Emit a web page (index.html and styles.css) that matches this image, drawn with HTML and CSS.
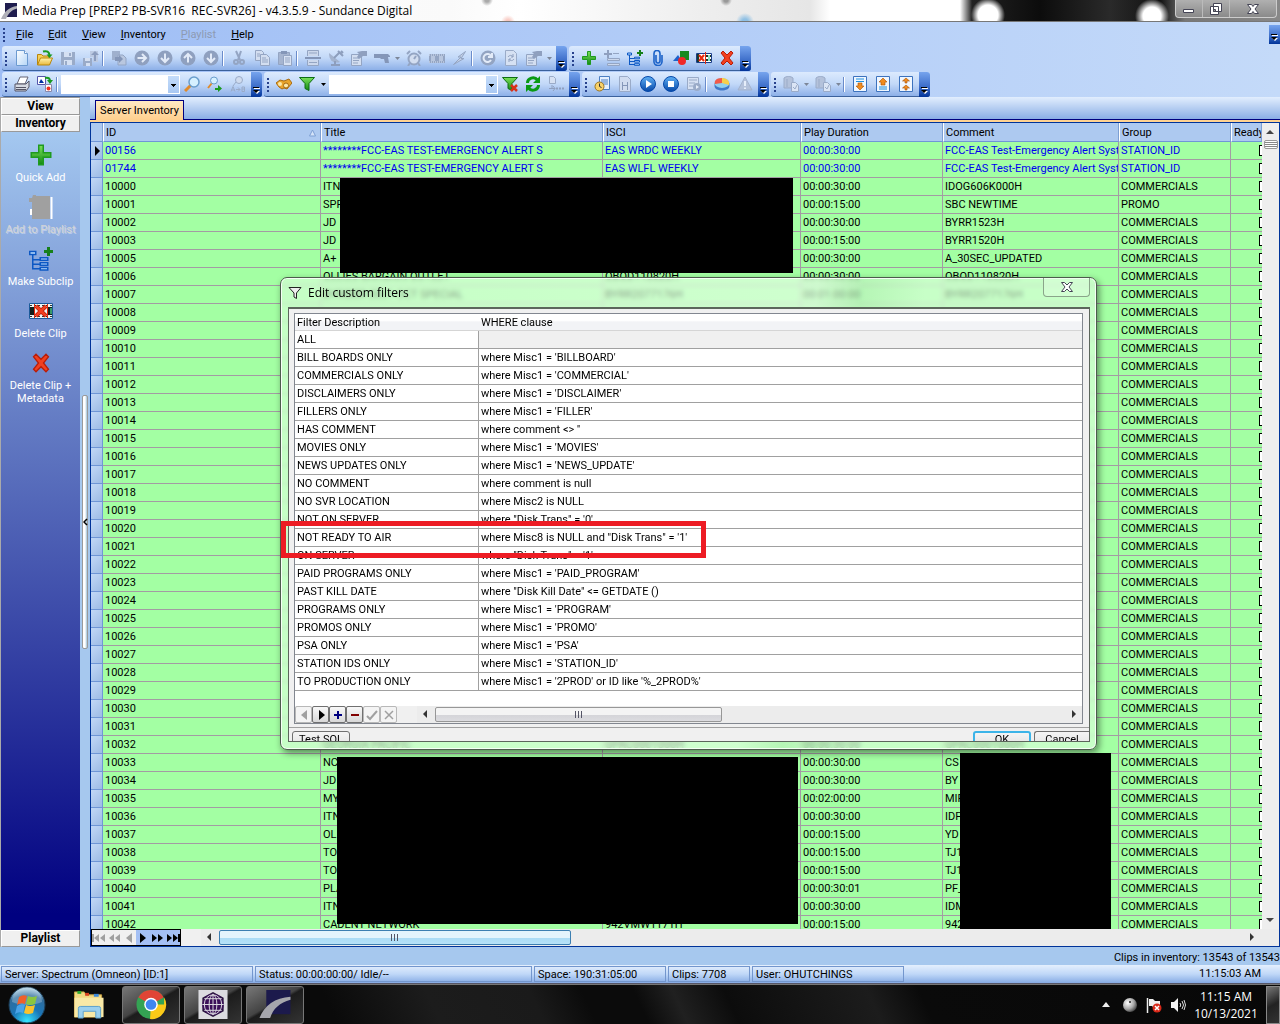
FILE: index.html
```html
<!DOCTYPE html>
<html lang="en">
<head>
<meta charset="utf-8">
<title>Media Prep</title>
<link rel="stylesheet" href="styles.css">
</head>
<body>
<svg class="sprite" aria-hidden="true">
  <defs>
    <linearGradient id="gGreen" x1="0" y1="0" x2="0" y2="1"><stop offset="0" stop-color="#7be05a"/><stop offset="1" stop-color="#128a12"/></linearGradient>
    <linearGradient id="gBlue" x1="0" y1="0" x2="0" y2="1"><stop offset="0" stop-color="#5fb0f5"/><stop offset="1" stop-color="#0648a8"/></linearGradient>
    <linearGradient id="gPage" x1="0" y1="0" x2="1" y2="1"><stop offset="0" stop-color="#fff"/><stop offset="1" stop-color="#b5d6f7"/></linearGradient>
    <linearGradient id="gFolder" x1="0" y1="0" x2="0" y2="1"><stop offset="0" stop-color="#fff3b0"/><stop offset="1" stop-color="#e9b93c"/></linearGradient>
    <radialGradient id="gOrb" cx=".5" cy=".95" r=".9"><stop offset="0" stop-color="#35e6ff"/><stop offset=".45" stop-color="#1a76b8"/><stop offset=".8" stop-color="#2f6c9c"/><stop offset="1" stop-color="#9fc6dd"/></radialGradient>
    <radialGradient id="gBall" cx=".35" cy=".35" r=".7"><stop offset="0" stop-color="#fff"/><stop offset=".6" stop-color="#aaa"/><stop offset="1" stop-color="#444"/></radialGradient>
  </defs>
  <symbol id="i-new" viewBox="0 0 16 16"><path d="M2.500.5h8l3 3v12h-11z" fill="url(#gPage)" stroke="#6c9ad0"/><path d="M10.500.5v3h3" fill="#fff" stroke="#6c9ad0"/></symbol>
  <symbol id="i-open" viewBox="0 0 16 16"><path d="M.5 14.500v-10h4l1.500 1.500h6v8.500z" fill="#f5cf5a" stroke="#b8860b"/><path d="M.5 15l3-7h12l-3 7z" fill="url(#gFolder)" stroke="#b8860b"/><path d="M6 1.500c4-1 6 0 6.500 3.500" fill="none" stroke="#18981f" stroke-width="2"/><path d="M9.500 4.500h6l-3 3.500z" fill="#18981f"/></symbol>
  <symbol id="i-save" viewBox="0 0 16 16"><path d="M1 2h14v13H1z" fill="#9aabc8"/><path d="M4 2h8v5H4zM4 10h8v5H4z" fill="#d5e0f2"/><path d="M5 11h2v4H5zM9 3h2v3H9z" fill="#9aabc8"/></symbol>
  <symbol id="i-savearrow" viewBox="0 0 16 16"><path d="M0 8h9v8H0z" fill="#9aabc8"/><path d="M2 8h5v3H2zM3 13h4v3H3z" fill="#d5e0f2"/><path d="M7 1h8v11h-5V7H7z" fill="#bccae2"/><path d="M11 11V5H8l4-4 4 4h-3v6z" fill="#8c9dbd"/></symbol>
  <symbol id="i-copyarrow" viewBox="0 0 16 16"><path d="M1 1h8v9H1z" fill="#9fb0cd"/><path d="M7 5h5l3 3v7H7z" fill="#b9c7df" stroke="#93a5c4"/><path d="M4 7h4V5l4 4-4 4v-2H4z" fill="#8496b8"/></symbol>
  <symbol id="i-right" viewBox="0 0 16 16"><circle cx="8" cy="8" r="7.500" fill="#8fa0bf"/><path d="M3.500 8h8M8 4l4 4-4 4" fill="none" stroke="#e3ebf8" stroke-width="2"/></symbol>
  <symbol id="i-down" viewBox="0 0 16 16"><circle cx="8" cy="8" r="7.500" fill="#8fa0bf"/><path d="M8 3.500v8M4 8l4 4 4-4" fill="none" stroke="#e3ebf8" stroke-width="2"/></symbol>
  <symbol id="i-up" viewBox="0 0 16 16"><circle cx="8" cy="8" r="7.500" fill="#8fa0bf"/><path d="M8 12.500v-8M4 8l4-4 4 4" fill="none" stroke="#e3ebf8" stroke-width="2"/></symbol>
  <symbol id="i-cut" viewBox="0 0 16 16"><path d="M5 1l4 9M10 1L7 10" stroke="#94a5c3" stroke-width="2"/><circle cx="5" cy="12" r="2" fill="none" stroke="#94a5c3" stroke-width="2"/><circle cx="11" cy="12" r="2" fill="none" stroke="#94a5c3" stroke-width="2"/></symbol>
  <symbol id="i-copy" viewBox="0 0 16 16"><path d="M1.500.5h6l2 2v8h-8z" fill="#d3def0" stroke="#94a5c3"/><path d="M6.500 4.500h6l3 3v8h-9z" fill="#d3def0" stroke="#94a5c3"/><path d="M8 8h4M8 10h6M8 12h6M3 4h3M3 6h3" stroke="#94a5c3"/></symbol>
  <symbol id="i-paste" viewBox="0 0 16 16"><path d="M1.500 2.500h11v12h-11z" fill="#a6b5d0" stroke="#94a5c3"/><path d="M4 1h6v3H4z" fill="#8496b8"/><path d="M6.500 5.500h8v10h-8z" fill="#d8e2f3" stroke="#94a5c3"/><path d="M8 8h5M8 10h5M8 12h5" stroke="#94a5c3"/></symbol>
  <symbol id="i-split" viewBox="0 0 16 16"><path d="M2.500 6V.5h11V6M2.500 10v5.500h11V10" fill="#ccd8ec" stroke="#94a5c3"/><path d="M0 8h16" stroke="#8496b8" stroke-width="2"/><path d="M4 3h8M4 12.500h8" stroke="#94a5c3"/></symbol>
  <symbol id="i-dish" viewBox="0 0 16 16"><path d="M1 3c0 8 5 11 11 9z" fill="#a3b3ce"/><path d="M6 8l6-6M13 1l2 2M10 1l5 5M3 15h9M7 11v4" stroke="#8d9ebd" stroke-width="2"/></symbol>
  <symbol id="i-props" viewBox="0 0 16 16"><path d="M.5 4.500h10v11H.5z" fill="#d3def0" stroke="#94a5c3"/><path d="M2 8h6M2 10.500h6M2 13h5" stroke="#94a5c3"/><path d="M6 2l5-1h5v5h-4L8 9 6 7l2-3z" fill="#8fa0bf"/></symbol>
  <symbol id="i-gun" viewBox="0 0 16 16"><path d="M0 4h14l2 2v1h-2l1 6h-4l-1-4H7L6 8H0z" fill="#8496b8"/></symbol>
  <symbol id="i-clock" viewBox="0 0 16 16"><circle cx="8" cy="9" r="5.500" fill="#d3def0" stroke="#94a5c3" stroke-width="2"/><path d="M8 9l2-3M1 4l3-3M15 4l-3-3M4 13l-2 3M12 13l2 3" stroke="#94a5c3" stroke-width="2"/></symbol>
  <symbol id="i-film" viewBox="0 0 16 16"><path d="M0 4h16v9H0z" fill="#94a5c3"/><path d="M2 6h4v5H2zM10 6h4v5h-4z" fill="#b8c6de"/><path d="M0 5h16M0 12h16" stroke="#dbe5f5" stroke-dasharray="1 1"/></symbol>
  <symbol id="i-bolt" viewBox="0 0 16 16"><path d="M13.500 1.500L6 7h3L1.500 14.500 12 8.500H9z" fill="#c4d1e7" stroke="#94a5c3"/></symbol>
  <symbol id="i-c" viewBox="0 0 16 16"><circle cx="8" cy="8" r="7.500" fill="#93a4c2"/><path d="M11 6a4 4 0 1 0 0 4M12 3v4H8" fill="none" stroke="#e3ebf8" stroke-width="2"/></symbol>
  <symbol id="i-pageref" viewBox="0 0 16 16"><path d="M2.500.5h8l3 3v12h-11z" fill="#d6e1f3" stroke="#9aabc8"/><path d="M5 7c2-3 5-1 5 0M11 9c-2 3-5 1-5 0M10 4v3H8M6 12V9h2" fill="none" stroke="#8fa0bf"/></symbol>
  <symbol id="i-plus" viewBox="0 0 16 16"><path d="M6.500 1.500h3v5h5v3h-5v5h-3v-5h-5v-3h5z" fill="url(#gGreen)" stroke="#1f9a1f"/></symbol>
  <symbol id="i-listadd" viewBox="0 0 16 16"><path d="M4 0v8M0 4h8" stroke="#8fa0bf" stroke-width="2"/><path d="M9 3.500h6M3.500 8.500h12v2h-12zM3.500 13.500h12v2h-12z" fill="#ccd8ec" stroke="#94a5c3"/></symbol>
  <symbol id="i-tree" viewBox="0 0 16 16"><path d="M2.500 4v11M2.500 8.500h5M2.500 11.500h5M2.500 14.500h5" fill="none" stroke="#0d58c4"/><path d="M.5 3h4v2h-4zM7.500 7.200h5v1.600h-5zM7.500 10.500h5v1.600h-5zM7.500 13.700h5v1.600h-5z" fill="#b9dbff" stroke="#0d58c4"/><path d="M13 0v6M10 3h6" stroke="#16801a" stroke-width="2"/></symbol>
  <symbol id="i-clip" viewBox="0 0 16 16"><path d="M6 5v6a2 2 0 0 0 4 0V3.500a3 3 0 0 0-6 0V11a4 4 0 0 0 8 1V5" fill="none" stroke="#1b62c8" stroke-width="1.600"/></symbol>
  <symbol id="i-shapes" viewBox="0 0 16 16"><path d="M7 1h9v9H7z" fill="#188a1e"/><path d="M0 11l5-6 4 6z" fill="#1e62cc"/><circle cx="9" cy="11" r="4" fill="#f02828"/></symbol>
  <symbol id="i-delclip" viewBox="0 0 16 16"><path d="M.5 3.500h15v9H.5z" fill="#fff" stroke="#1b3e8a"/><path d="M1 4h2v8H1zM10 5h5v2h-5zM10 9h5v2h-5z" fill="#173a2e"/><path d="M12 5h2v6h-2z" fill="#8fe0c0"/><path d="M3 5l5 6M8 5l-5 6" stroke="#e8290b" stroke-width="2"/><path d="M9.500 2v12" stroke="#e8290b"/></symbol>
  <symbol id="i-delclip2" viewBox="0 0 24 24"><path d="M.5 4.500h23v15H.5z" fill="#eef6f4" stroke="#1b5a9a"/><path d="M1 8h4v8H1zM19 8h4v8h-4z" fill="#12201c"/><path d="M21 9h2v6h-2z" fill="#3a9a6a"/><path d="M1 6.500h22M1 17.500h22" stroke="#333" stroke-dasharray="2 2"/><path d="M5.500 5v14M18.500 5v14" stroke="#e8290b"/><path d="M7 7l10 10M17 7L7 17" stroke="#b81c08" stroke-width="4"/><path d="M7 7l10 10M17 7L7 17" stroke="#f2401f" stroke-width="2.500"/></symbol>
  <symbol id="i-x" viewBox="0 0 16 16"><path d="M2 3l2-2 4 4 4-4 2 2-4 5 4 5-2 2-4-4-4 4-2-2 4-5z" fill="#f2401f" stroke="#b81c08"/></symbol>
  <symbol id="i-print" viewBox="0 0 16 16"><path d="M6 1h8l-3 7H3z" fill="#fff" stroke="#667"/><path d="M1 8h11l3-3v6l-3 4H1z" fill="#d5d9e2" stroke="#556"/><path d="M2 11.500h10M2 13.500h10" stroke="#556"/></symbol>
  <symbol id="i-convert" viewBox="0 0 16 16"><path d="M.5.5h8v8h-8z" fill="#fff" stroke="#55a"/><path d="M2 7l2-4 3 4z" fill="#0030a0"/><path d="M8.500 8.500h6v7h-6z" fill="#fff" stroke="#88a"/><circle cx="11.500" cy="12.500" r="2" fill="#f03020"/><path d="M8 2c4-1 5 1 5 3" fill="none" stroke="#18981f" stroke-width="2"/><path d="M10 4h6l-3 4z" fill="#18981f"/></symbol>
  <symbol id="i-find" viewBox="0 0 16 16"><path d="M7 9l-6 6" stroke="#e08a2a" stroke-width="3"/><circle cx="10" cy="6" r="5" fill="#d6f0ff" stroke="#6a9dcc" stroke-width="1.500"/></symbol>
  <symbol id="i-findnext" viewBox="0 0 16 16"><path d="M5 7l-4 5" stroke="#e08a2a" stroke-width="2"/><circle cx="7" cy="4.500" r="3.500" fill="#d6f0ff" stroke="#6a9dcc"/><path d="M8 12h3V9l4 3.500-4 3.500v-2H8z" fill="#1b9a1f"/></symbol>
  <symbol id="i-replace" viewBox="0 0 16 16"><circle cx="9" cy="4" r="3.500" fill="#d0dcef" stroke="#9aabc8"/><path d="M6 6l-3 4M1 15.500l2-5 2 5M1.500 14h3M6 13.500h4M8 11.500l2 2-2 2M12 11h2.500v4.500H12zM12 13h3" fill="none" stroke="#9aabc8"/></symbol>
  <symbol id="i-binoc" viewBox="0 0 16 16"><path d="M0 7l4-3 4 1 5-2 3 4-5 6-3-1-2 1-3-2z" fill="#e9a52b" stroke="#a86a10"/><circle cx="4" cy="8" r="2" fill="#fbe8a8"/><circle cx="10" cy="9.500" r="2.500" fill="#fbe8a8" stroke="#a86a10"/></symbol>
  <symbol id="i-funnel" viewBox="0 0 16 16"><path d="M.5 1.500h15l-5.500 6v7l-4-2v-5z" fill="url(#gGreen)" stroke="#0d6d12"/></symbol>
  <symbol id="i-funnelx" viewBox="0 0 16 16"><path d="M.5 1.500h15l-5.500 6v7l-4-2v-5z" fill="url(#gGreen)" stroke="#0d6d12"/><path d="M9 9l6 6M15 9l-6 6" stroke="#d8311a" stroke-width="2.500"/></symbol>
  <symbol id="i-refresh" viewBox="0 0 16 16"><path d="M2.500 7a5.500 5 0 0 1 10-3M13.500 9a5.500 5 0 0 1-10 3" fill="none" stroke="#0a9a14" stroke-width="3"/><path d="M15 0v7H8zM1 16V9h7z" fill="#0a9a14"/></symbol>
  <symbol id="i-docflow" viewBox="0 0 16 16"><path d="M1.500.5h4l2 2v5h-6z" fill="#d6e1f3" stroke="#9aabc8"/><path d="M1 12.500h6M4 9v3M5 10l2 2.500-2 2.500" fill="none" stroke="#8fa0bf"/><path d="M8 12.500h8" stroke="#8fa0bf" stroke-width="2" stroke-dasharray="2 1"/></symbol>
  <symbol id="i-sched" viewBox="0 0 16 16"><path d="M5.500.5h10v13h-10z" fill="#e5f0ff" stroke="#4c7fc2"/><path d="M7 4h7M7 6h7M7 8h7" stroke="#4c7fc2"/><circle cx="5.500" cy="10.500" r="4.500" fill="#f8d26a" stroke="#9a7320"/><path d="M5.500 7.500v3l2 1" fill="none" stroke="#333"/></symbol>
  <symbol id="i-filmdoc" viewBox="0 0 16 16"><path d="M2.500.5h8l3 3v12h-11z" fill="#d0dcf0" stroke="#9aabc8"/><path d="M5 6h1v8H5zM10 6h1v8h-1zM6 9h4v1H6z" fill="#8496b8"/></symbol>
  <symbol id="i-play" viewBox="0 0 16 16"><circle cx="8" cy="8" r="7.500" fill="url(#gBlue)" stroke="#0648a8"/><path d="M6 4l6 4-6 4z" fill="#fff"/></symbol>
  <symbol id="i-stop" viewBox="0 0 16 16"><circle cx="8" cy="8" r="7.500" fill="url(#gBlue)" stroke="#0648a8"/><path d="M5 5h6v6H5z" fill="#fff"/></symbol>
  <symbol id="i-listplay" viewBox="0 0 16 16"><path d="M1.500 1.500h11v12h-11z" fill="#d6e1f3" stroke="#9aabc8"/><path d="M3 4h8M3 7h6M3 10h4" stroke="#9aabc8"/><circle cx="11" cy="11" r="4" fill="#9aabc8"/><path d="M10 9l3 2-3 2z" fill="#e6eefa"/></symbol>
  <symbol id="i-pie" viewBox="0 0 16 16"><path d="M.5 7v3c0 6 15 6 15 0V7z" fill="#3f78c8"/><ellipse cx="8" cy="7" rx="7.500" ry="5" fill="#8fd0f0"/><path d="M8 7V2C2 2 0 5 1 8z" fill="#f05a4a"/><path d="M8 7l7 2c1-5-3-7-7-7z" fill="#f7cf4a"/></symbol>
  <symbol id="i-warn" viewBox="0 0 16 16"><path d="M8 1l7 13H1z" fill="#b4c2db" stroke="#a3b3ce"/><path d="M8 5v5M8 11.500v1.500" stroke="#e6eefa" stroke-width="2"/></symbol>
  <symbol id="i-dbdoc" viewBox="0 0 16 16"><path d="M1 2c2-2 7-2 9 0v10H1z" fill="#b4c2db" stroke="#9aabc8"/><path d="M8.500 6.500h4l3 3v6h-7z" fill="#dbe5f5" stroke="#9aabc8"/><path d="M4 3v8M10 11l2 2 2-4" fill="none" stroke="#9aabc8"/></symbol>
  <symbol id="i-pgdown" viewBox="0 0 16 16"><path d="M1.500.5h13v15h-13z" fill="#f0f7ff" stroke="#3c72be"/><path d="M4 3h8M4 5.500h8" stroke="#1e90e0"/><path d="M6 7h4v3h2l-4 4-4-4h2z" fill="#f08c1e" stroke="#a85208" stroke-width=".6"/></symbol>
  <symbol id="i-pgup" viewBox="0 0 16 16"><path d="M1.500.5h13v15h-13z" fill="#f0f7ff" stroke="#3c72be"/><path d="M4 11h8M4 13h8" stroke="#1e90e0"/><path d="M6 9h4V6h2L8 2 4 6h2z" fill="#f08c1e" stroke="#a85208" stroke-width=".6"/></symbol>
  <symbol id="i-pgtop" viewBox="0 0 16 16"><path d="M1.500.5h13v15h-13z" fill="#f0f7ff" stroke="#3c72be"/><path d="M8 2l3.500 3H9v2H7V5H4.500zM8 9l3.500 3H9v2H7v-2H4.500z" fill="#f08c1e" stroke="#a85208" stroke-width=".6"/></symbol>
  <symbol id="i-dd" viewBox="0 0 5 3"><path d="M0 0h5L2.500 3z" fill="currentColor"/></symbol>
  <symbol id="i-more" viewBox="0 0 11 25"><path d="M3 16h6v1H3zM3 19h6l-3 3z" fill="#fff"/><path d="M2 15h6v1H2zM2 18h6l-3 3z" fill="#000"/></symbol>
  <symbol id="i-addlist" viewBox="0 0 24 24"><path d="M22.500 2v22M1 5v2M2 14v6" stroke="#fff" stroke-width="2"/><path d="M4 0h3v1h14v23H3V7H0V3h3z" fill="#a0a0a0"/></symbol>
  <symbol id="i-sun" viewBox="0 0 16 16"><path d="M4 0h12v14H4z" fill="#1f1d4e"/><path d="M0 16C3 9 8 4 16 3v2.500C10 7 7 11 5 16z" fill="#b0b0b8"/></symbol>
  <symbol id="i-first" viewBox="0 0 14 12"><path d="M1 2v8" stroke="currentColor" stroke-width="2"/><path d="M7 2v8L2 6zM13 2v8L8 6z" fill="currentColor"/></symbol>
  <symbol id="i-rew" viewBox="0 0 14 12"><path d="M7 2v8L2 6zM13 2v8L8 6z" fill="currentColor"/></symbol>
  <symbol id="i-prev" viewBox="0 0 14 12"><path d="M10 1v10L4 6z" fill="currentColor"/></symbol>
  <symbol id="i-next" viewBox="0 0 14 12"><path d="M4 1v10l6-5z" fill="currentColor"/></symbol>
  <symbol id="i-ff" viewBox="0 0 14 12"><path d="M1 2v8l5-4zM7 2v8l5-4z" fill="currentColor"/></symbol>
  <symbol id="i-last" viewBox="0 0 14 12"><path d="M1 2v8l5-4zM7 2v8l5-4z" fill="currentColor"/><path d="M13 2v8" stroke="currentColor" stroke-width="2"/></symbol>
</svg>

<header class="titlebar">
  <svg class="ic16"><use href="#i-sun"/></svg>
  <h1 class="titlebar-text">Media Prep [PREP2 PB-SVR16&nbsp; REC-SVR26] - v4.3.5.9 - Sundance Digital</h1>
  <div class="winbtns">
    <button type="button" aria-label="Minimize"><svg width="14" height="12"><path d="M1.500 6.500h10v3h-10z" fill="#fff" stroke="#445"/></svg></button>
    <button type="button" aria-label="Restore"><svg width="14" height="12"><path d="M4.500.5h8v8h-8zM1.500 3.500h8v8h-8z" fill="#fff" stroke="#445"/><path d="M4.500 6.500h2v2h-2z" fill="#999" stroke="#445"/></svg></button>
    <button type="button" aria-label="Close" class="wide"><svg width="14" height="12"><path d="M1.500 1.500h4l1.500 2 1.500-2h4L9 6l3.500 4.500h-4L7 8.500l-1.500 2h-4L5 6z" fill="#fff" stroke="#445"/></svg></button>
  </div>
</header>

<div class="bars">
  <nav class="menubar">
    <span class="grip"></span>
    <a href="#"><u>F</u>ile</a><a href="#"><u>E</u>dit</a><a href="#"><u>V</u>iew</a><a href="#"><u>I</u>nventory</a><a href="#" class="off"><u>P</u>laylist</a><a href="#"><u>H</u>elp</a>
    <span class="cap cap-end"><svg><use href="#i-more"/></svg></span>
  </nav>
  <div class="toolrow" id="toolrow1"></div>
  <div class="toolrow" id="toolrow2"></div>
</div>

<main class="work">
  <aside class="side">
    <button type="button" class="side-head">View</button>
    <button type="button" class="side-head">Inventory</button>
    <div class="side-body">
      <a href="#"><svg class="ic24"><use href="#i-plus"/></svg>Quick Add</a>
      <a href="#" class="dim"><svg class="ic24"><use href="#i-addlist"/></svg>Add to Playlist</a>
      <a href="#"><svg class="ic24"><use href="#i-tree"/></svg>Make Subclip</a>
      <a href="#"><svg class="ic24"><use href="#i-delclip2"/></svg>Delete Clip</a>
      <a href="#"><svg class="ic24 pad"><use href="#i-x"/></svg>Delete Clip +<br>Metadata</a>
    </div>
    <button type="button" class="side-head">Playlist</button>
  </aside>
  <div class="splitter"><div class="splitter-grip"><svg width="5" height="8"><path d="M4 1L1 4l3 3" fill="none" stroke="#000" stroke-width="1.500"/></svg></div></div>
  <section class="content">
    <div class="tabs"><button type="button" class="tab">Server Inventory</button></div>
    <div class="frame">
      <div class="gridrow">
        <div class="gridview">
          <table class="inv">
            <colgroup><col class="c-ind"><col class="c-id"><col class="c-title"><col class="c-isci"><col class="c-dur"><col class="c-com"><col class="c-grp"><col></colgroup>
            <thead><tr><th></th><th><div class="sorted">ID<svg width="7" height="8"><path d="M3.500 1l3 6h-6z" fill="#d4e3f8" stroke="#7d9fd3"/></svg></div></th><th>Title</th><th>ISCI</th><th>Play Duration</th><th>Comment</th><th>Group</th><th>Ready</th></tr></thead>
            <tbody id="inv"></tbody>
          </table>
        </div>
        <div class="vscroll">
          <svg width="9" height="6"><path d="M0 5l4-4 4 4z" fill="#444"/></svg>
          <div class="vthumb"></div>
          <svg class="end" width="9" height="6"><path d="M0 1l4 4 4-4z" fill="#444"/></svg>
        </div>
      </div>
      <div class="hrow">
        <div class="nav">
          <button type="button" aria-label="First" disabled><svg><use href="#i-first"/></svg></button>
          <button type="button" aria-label="Page back" disabled><svg><use href="#i-rew"/></svg></button>
          <button type="button" aria-label="Previous" disabled><svg><use href="#i-prev"/></svg></button>
          <button type="button" aria-label="Next"><svg><use href="#i-next"/></svg></button>
          <button type="button" aria-label="Page forward"><svg><use href="#i-ff"/></svg></button>
          <button type="button" aria-label="Last"><svg><use href="#i-last"/></svg></button>
        </div>
        <div class="hscroll">
          <svg width="6" height="9"><path d="M5 0L1 4l4 4z" fill="#333"/></svg>
          <div class="hthumb blue"><i></i></div>
          <svg class="end" width="6" height="9"><path d="M1 0l4 4-4 4z" fill="#333"/></svg>
        </div>
      </div>
    </div>
  </section>
</main>

<p class="count">Clips in inventory: 13543 of 13543</p>
<footer class="status">
  <span class="s1">Server: Spectrum (Omneon) [ID:1]</span>
  <span class="s2">Status: 00:00:00:00/ Idle/--</span>
  <span class="s3">Space: 190:31:05:00</span>
  <span class="s4">Clips: 7708</span>
  <span class="s5">User: OHUTCHINGS</span>
  <time>11:15:03 AM</time>
</footer>

<div class="taskbar">
  <button type="button" class="orb" aria-label="Start"><svg viewBox="0 0 38 38"><circle cx="19" cy="19" r="18" fill="url(#gOrb)" stroke="#1c3b52"/><path d="M4 16a15 15 0 0 1 30 0c-9 4-21 4-30 0z" fill="#fff" opacity=".25"/><path d="M11 11q4-3 8-1l-2 8q-4-2-8 1z" fill="#f0602a"/><path d="M20 10q4 2 9 0l-2 8q-5 2-9 0z" fill="#8cc63e"/><path d="M9 20q4-3 8-1l-2 8q-4-2-8 1z" fill="#4aa3e8"/><path d="M18 19q4 2 9 0l-2 8q-5 2-9 0z" fill="#fbc22c"/></svg></button>
  <button type="button" class="task plain" aria-label="Explorer"><svg viewBox="0 0 34 32"><path d="M2 3h10l2 3h16v23H2z" fill="#f3d980" stroke="#c8a040"/><path d="M5 2h4v3H5z" fill="#2eaa30"/><path d="M13 4h4v3h-4z" fill="#d84020"/><path d="M22 5h5v3h-5z" fill="#3c88d8"/><path d="M2 9h30v20H2z" fill="#f9e9a6"/><path d="M6 30V20q0-2 2-2h19q2 0 2 2v10h-5v-7H11v7z" fill="#9bd0ee" stroke="#5aa0cc"/></svg></button>
  <button type="button" class="task" aria-label="Chrome"><svg viewBox="0 0 32 32"><circle cx="16" cy="16" r="15" fill="#34a353"/><path d="M16 16L3 8.500A15 15 0 0 1 29 8.500z" fill="#e04436"/><path d="M16 16h13.500V8.500A15 15 0 0 1 15 31z" fill="#fbc918"/><path d="M3 8.500h26L16 16z" fill="#e04436"/><circle cx="16" cy="16" r="7" fill="#fff"/><circle cx="16" cy="16" r="5.500" fill="#3f86f0"/></svg></button>
  <button type="button" class="task" aria-label="Network"><svg viewBox="0 0 32 32"><path d="M1 1h30v30H1z" fill="#dcdce0"/><path d="M16 3l11 6v14l-11 6-11-6V9z" fill="#28143c"/><circle cx="16" cy="16" r="11" fill="#3a1058"/><g fill="none" stroke="#dcdce0"><ellipse cx="16" cy="16" rx="4" ry="10"/><ellipse cx="16" cy="16" rx="9" ry="10"/><path d="M16 5v22M5 16h22M7 10h18M7 22h18"/></g></svg></button>
  <button type="button" class="task" aria-label="Media Prep"><svg viewBox="0 0 34 32"><path d="M8 1h25v25H8z" fill="#1c1a4c"/><path d="M1 30C6 17 17 9 33 8v3C22 14 15 20 12 30z" fill="#a6a6ac"/></svg></button>
  <div class="tray">
    <svg width="8" height="5"><path d="M0 5l4-5 4 5z" fill="#eee"/></svg>
    <svg width="16" height="16"><circle cx="8" cy="8" r="7" fill="url(#gBall)"/><circle cx="8" cy="5" r="1" fill="#222"/></svg>
    <svg width="16" height="16"><path d="M1.500 1v15" stroke="#eee" stroke-width="1.500"/><path d="M3 2h4l2 2h5v7H8L6 9H3z" fill="#eee"/><circle cx="11" cy="11" r="4.500" fill="#d82818"/><path d="M9 9l4 4M13 9l-4 4" stroke="#fff" stroke-width="1.500"/></svg>
    <svg width="16" height="16"><path d="M1 5h3l4-4v14l-4-4H1z" fill="#f4f4f4"/><path d="M10 6q1.500 2 0 4M12 4q3 4 0 8M14 3q3 5 0 10" fill="none" stroke="#ddd"/></svg>
  </div>
  <div class="clock"><span>11:15 AM</span><span>10/13/2021</span></div>
  <button type="button" class="peek" aria-label="Show desktop"></button>
</div>

<div class="redact r1"></div>
<div class="redact r2"></div>
<div class="redact r3"></div>

<div class="dialog" role="dialog" aria-labelledby="dlg-title">
  <div class="dlg-head">
    <svg width="14" height="14"><path d="M1 1.500h12L8.500 7v5.500L6 11V7z" fill="#eee" stroke="#222"/></svg>
    <h2 id="dlg-title">Edit custom filters</h2>
    <button type="button" class="dlg-close" aria-label="Close"><svg width="14" height="12"><path d="M1.500 1.500h3L7 4l2.500-2.500h3L9 6l3.500 4.500h-3L7 8l-2.500 2.500h-3L5 6z" fill="#fff" stroke="#445"/></svg></button>
  </div>
  <div class="dlg-client">
    <div class="dlg-grid">
      <table class="filters">
        <colgroup><col class="c-desc"><col></colgroup>
        <thead><tr><th>Filter Description</th><th>WHERE clause</th></tr></thead>
        <tbody id="filters"></tbody>
      </table>
      <div class="dlg-nav">
        <button type="button" aria-label="Previous" disabled><svg width="12" height="12"><path d="M9 1v10L3 6z" fill="#a0a0a0"/></svg></button>
        <button type="button" aria-label="Next"><svg width="12" height="12"><path d="M4 1v10l6-5z" fill="#000"/></svg></button>
        <button type="button" aria-label="Insert"><svg width="12" height="12"><path d="M6 2v8M2 6h8" stroke="#000080" stroke-width="2"/></svg></button>
        <button type="button" aria-label="Delete"><svg width="12" height="12"><path d="M2 6h8" stroke="#800000" stroke-width="2"/></svg></button>
        <button type="button" aria-label="Post" disabled><svg width="12" height="12"><path d="M1 7l3 3 7-8" fill="none" stroke="#a0a0a0" stroke-width="2"/></svg></button>
        <button type="button" aria-label="Undo" disabled><svg width="12" height="12"><path d="M2 2l8 8M10 2l-8 8" stroke="#a0a0a0" stroke-width="1.500"/></svg></button>
        <div class="hscroll">
          <svg width="6" height="9"><path d="M5 0L1 4l4 4z" fill="#333"/></svg>
          <div class="hthumb"><i></i></div>
          <svg class="end" width="6" height="9"><path d="M1 0l4 4-4 4z" fill="#333"/></svg>
        </div>
      </div>
    </div>
    <div class="dlg-foot">
      <button type="button">Test SQL</button>
      <button type="button" class="default">OK</button>
      <button type="button" class="cut">Cancel</button>
    </div>
  </div>
  <div class="marker"></div>
</div>
<script src="app.js"></script>
</body>
</html>
```
FILE: styles.css
```css
* { box-sizing: border-box; }
html, body { height: 100%; }
body {
  margin: 0;
  display: flex;
  flex-direction: column;
  overflow: hidden;
  position: relative;
  background: #a6c8ee;
  color: #000;
  font: 11px/14px Roboto, "Liberation Sans", sans-serif;
}
button { font: inherit; color: inherit; padding: 0; margin: 0; border: 0; background: none; }
a { color: inherit; text-decoration: none; }
h1, h2, p { margin: 0; font-weight: 400; }
svg { display: block; flex: none; }
.sprite { position: absolute; width: 0; height: 0; }
.ic16 { width: 16px; height: 16px; }
.ic24 { width: 24px; height: 24px; }
.pad { padding: 2px; }

/* title bar */
.titlebar {
  flex: none;
  display: flex;
  align-items: center;
  gap: 5px;
  height: 22px;
  padding-left: 1px;
  border-bottom: 1px solid #777;
  background:
    radial-gradient(circle at 988px 15px, #fff 10px, transparent 17px),
    radial-gradient(circle at 1152px 16px, #fff 9px, transparent 17px),
    radial-gradient(circle at 745px 22px, #8fc0e4 3px, transparent 9px),
    radial-gradient(circle at 508px 22px, #f8c8c0 2px, transparent 7px),
    radial-gradient(circle at 487px 0, #aaa 2px, transparent 6px),
    radial-gradient(circle at 726px 0, #999 2px, transparent 6px),
    linear-gradient(90deg, #fff 0, #fafafa 450px, #fff 520px, #eee 700px, #e6e6e6 810px, #fff 830px, #fff 960px, #222 972px, #0c0c0c 1040px, #2a2a2a 1110px, #111 1160px, #777 1185px, #888 100%);
}
.titlebar-text { font: 12px/16px "Open Sans", "Noto Sans", sans-serif; white-space: nowrap; }
.winbtns {
  display: flex;
  align-self: flex-start;
  height: 18px;
  margin: 0 3px 0 auto;
  border: 1px solid #ccc;
  border-top: 0;
  border-radius: 0 0 4px 4px;
  background: linear-gradient(#b0b0b0, #8a8a8a);
}
.winbtns button { display: grid; place-items: center; width: 27px; border-right: 1px solid #bbb; }
.winbtns .wide { width: 46px; border: 0; }

/* menu and toolbars */
.bars { flex: none; background: linear-gradient(90deg, #9ebdf5, #c4daf9); }
.menubar { display: flex; align-items: center; height: 24px; }
.menubar a { padding: 2px 7px 0 8px; }
.menubar .off { color: #8d9ab2; }
.grip { width: 8px; height: 15px; background: radial-gradient(circle, #27418c 1px, transparent 1px) 2px 0 / 4px 4px repeat-y; flex: none; }
.toolrow { display: flex; gap: 2px; height: 26px; padding-left: 2px; }
.band {
  display: flex;
  align-items: center;
  height: 25px;
  border-radius: 3px;
  background: linear-gradient(#dceafe, #c2d8f8 50%, #8db0e8);
  border-bottom: 1px solid #3b619c;
}
.band .cap { margin-left: 2px; }
.cap { width: 11px; height: 25px; border-radius: 0 3px 3px 0; background: linear-gradient(#76a4ee, #3b6cc8 60%, #003399); flex: none; }
.cap svg { width: 11px; height: 25px; }
.cap-end { height: 19px; margin-left: auto; overflow: hidden; border-radius: 0; }
.cap-end svg { margin-top: -6px; }
.tool { display: flex; align-items: center; justify-content: center; width: 23px; height: 23px; }
.tool svg { width: 16px; height: 16px; }
.tool-dd { width: 9px; height: 23px; display: grid; place-items: center; color: #7c8698; }
.tool-dd.on { color: #000; width: 11px; }
.tool-dd svg { width: 5px; height: 3px; }
.sep { width: 5px; height: 15px; border-left: 1px solid #6a8ccb; box-shadow: inset 1px 0 #fff; flex: none; }
.combo {
  appearance: none;
  width: 119px;
  height: 19px;
  border: 1px solid #fff;
  border-radius: 0;
  background: linear-gradient(#000, #000) no-repeat right 3px top 8px / 5px 1px, linear-gradient(#000, #000) no-repeat right 4px top 9px / 3px 1px, linear-gradient(#000, #000) no-repeat right 5px top 10px / 1px 1px, linear-gradient(#c4dcfa, #a9c8f2) no-repeat right / 11px 100%, #fff;
}
.combo.long { width: 169px; }

/* working area */
.work { flex: 1; min-height: 0; display: flex; margin-top: -1px; }
.side { width: 80px; flex: none; display: flex; flex-direction: column; border-left: 1px solid #aaa; border-top: 1px solid #999; }
.side-head { height: 17px; flex: none; background: #f0f0f0; border: 1px solid #fff; border-color: #fff #999 #999 #fff; font: 700 12px/15px Roboto, sans-serif; }
.side-body { flex: 1; min-height: 0; padding-top: 11px; background: linear-gradient(#a4c8f0, #647cc4 36%, #000080 98%); color: #fff; }
.side-body a { display: flex; flex-direction: column; align-items: center; gap: 4px; height: 52px; line-height: 13px; text-align: center; white-space: nowrap; }
.side-body .dim { color: #d4d4d4; text-shadow: 1px 1px #fff6; }
.splitter { width: 10px; flex: none; display: flex; align-items: center; padding: 0 2px; }
.splitter-grip { width: 6px; height: 254px; display: flex; align-items: center; border: 1px solid #9a9a9a; border-radius: 2px; background: linear-gradient(90deg, #fff 50%, #9fc2d8); }
.content { flex: 1; min-width: 0; display: flex; flex-direction: column; }
.tabs { flex: none; height: 25px; padding: 3px 5px 0; background: linear-gradient(#e2eefe, #86abe4); border-bottom: 2px solid #ffd291; box-shadow: inset 0 -1px #000080; }
.tab { display: block; height: 20px; width: 89px; border: 1px solid #000080; border-bottom: 0; background: linear-gradient(#ffeac4, #ffcf8e); }
.frame { flex: 1; min-height: 0; display: flex; flex-direction: column; border: 1px solid #003399; }
.gridrow { flex: 1; min-height: 0; display: flex; }
.gridview { flex: 1; min-width: 0; overflow: hidden; background: #a3ffa3; }

table { border-collapse: separate; border-spacing: 0; table-layout: fixed; width: 100%; }
th { font-weight: 400; text-align: left; }
td, th { overflow: hidden; white-space: nowrap; }
.inv th { height: 19px; padding: 1px 2px 0; line-height: 16px; background: #adc9f0; border-bottom: 1px solid #6f96d6; border-left: 1px solid #fff; border-right: 1px solid #7d9fd3; }
.inv th:first-child { border-left: 0; }
.inv td { height: 18px; padding: 1px 2px 0; line-height: 16px; border-right: 1px solid #a39ba3; border-bottom: 1px solid #a39ba3; }
.inv td:first-child { background: linear-gradient(135deg, #c2d8f6, #9dbbe6); border-color: #6f96d6; padding: 0; }
.inv .live td { color: #0000f0; }
.inv td:last-child { padding: 0 0 0 28px; border-right: 0; }
.inv input { appearance: none; display: block; margin: 0; width: 11px; height: 11px; background: #fff; border: 1px solid #000; }
.inv td svg { margin-left: 4px; }
.sorted { display: flex; align-items: center; justify-content: space-between; padding-right: 2px; }
.c-ind { width: 12px; }
.c-id { width: 218px; }
.c-title { width: 282px; }
.c-isci { width: 198px; }
.c-dur { width: 142px; }
.c-com { width: 176px; }
.c-grp { width: 112px; }

.vscroll { width: 17px; flex: none; display: flex; flex-direction: column; align-items: center; gap: 5px; padding: 6px 0; background: #eeeeee; }
.vthumb { width: 14px; height: 9px; border: 1px solid #999; border-radius: 2px; background: repeating-linear-gradient(#fff 0 1px, #888 1px 2px); }
.end { margin-top: auto; }
.hrow { flex: none; display: flex; height: 17px; background: #f0f0f0; }
.nav { display: flex; width: 90px; flex: none; border: 1px solid #000; background: #fff; }
.nav button { flex: 1; display: grid; place-items: center; background: #a4c0f4; }
.nav button:disabled { background: #f0f0f0; color: #a0a0a0; }
.nav svg { width: 14px; height: 12px; }
.hscroll { flex: 1; min-width: 0; display: flex; align-items: center; gap: 7px; height: 17px; padding: 0 5px; background: #ececec; }
.hscroll .end { margin: 0 0 0 auto; }
.hrow .hscroll { margin-left: 20px; padding-right: 24px; }
.hthumb { width: 287px; height: 15px; display: grid; place-items: center; border: 1px solid #979797; border-radius: 2px; background: linear-gradient(#f4f4f4 50%, #d4d4d8 50%, #dcdce0); }
.hthumb.blue { width: 352px; border-color: #3c7fb1; background: linear-gradient(#e3f4fc 50%, #a9dbf5 50%, #b6e2f8); }
.hthumb i { width: 8px; height: 7px; background: repeating-linear-gradient(90deg, #556 0 1px, transparent 1px 3px); }

/* status */
.count { flex: none; height: 18px; padding: 4px 0 0; text-align: right; white-space: nowrap; }
.status { flex: none; display: flex; align-items: center; gap: 2px; height: 19px; padding: 0 19px 0 1px; background: linear-gradient(#e4effd, #c0d8f8 50%, #86abe4); border-bottom: 1px solid #556; }
.status span { height: 16px; line-height: 16px; padding: 0 3px; border: 1px solid #7396cd; white-space: nowrap; }
.status time { margin-left: auto; line-height: 16px; }
.s1 { width: 252px; }
.s2 { width: 277px; }
.s3 { width: 132px; }
.s4 { width: 82px; }
.s5 { width: 152px; }

/* taskbar */
.taskbar {
  flex: none;
  display: flex;
  align-items: center;
  gap: 4px;
  height: 40px;
  padding-left: 8px;
  border-top: 1px solid #777;
  background: linear-gradient(65deg, #0a0a0a 26%, #1c1c1c 34%, #1a1a1a 42%, #0b0b0b 46%, #0b0b0b 50%, #202020 53%, #0c0c0c 57%, #1c1c1c 68%, #0a0a0a 72%, #080808);
}
.orb { width: 48px; }
.orb svg { width: 38px; height: 38px; }
.task { width: 58px; height: 38px; display: grid; place-items: center; border: 1px solid #777; border-radius: 3px; background: linear-gradient(150deg, #777 0, #444 45%, #1c1c1c 50%, #333); }
.task.plain { border-color: transparent; background: none; }
.task svg { width: 34px; height: 31px; }
.tray { display: flex; align-items: center; gap: 8px; margin-left: auto; }
.tray svg:first-child { margin-right: 4px; }
.clock { display: flex; flex-direction: column; align-items: center; width: 72px; color: #fff; font: 12px/17px "Open Sans", sans-serif; }
.peek { width: 14px; height: 38px; border: 1px solid #888; background: linear-gradient(150deg, #777, #222 50%, #333); }

/* blacked-out areas */
.redact { position: absolute; background: #000; }
.r1 { left: 340px; top: 178px; width: 453px; height: 95px; }
.r2 { left: 337px; top: 757px; width: 461px; height: 167px; }
.r3 { left: 960px; top: 753px; width: 151px; height: 176px; }

/* dialog */
.dialog {
  position: absolute;
  left: 280px;
  top: 277px;
  width: 817px;
  height: 473px;
  display: flex;
  flex-direction: column;
  padding: 0 6px 7px 7px;
  border: 1px solid #4c5c4c;
  border-radius: 7px;
  background: linear-gradient(100deg, #d8ffd8a0, #e8ffe8a0 60%, #c0f0c0a0 65%, #dcffdca0 72%);
  backdrop-filter: blur(2px);
  box-shadow: inset 0 0 0 1px #f4fff4, 2px 3px 7px #0007;
}
.dlg-head { flex: none; display: flex; align-items: center; gap: 6px; height: 29px; }
.dlg-head h2 { font: 12px/16px "Open Sans", "Noto Sans", sans-serif; }
.dlg-close { display: grid; place-items: center; align-self: flex-start; margin-left: auto; width: 47px; height: 19px; border: 1px solid #8aa58a; border-top: 0; border-radius: 0 0 4px 4px; background: #e8ffe855; }
.dlg-client { flex: 1; min-height: 0; display: flex; flex-direction: column; border: 1px solid #5c665c; border-top-width: 2px; background: #f0f0f0; overflow: hidden; padding: 4px 0 0; }
.dlg-grid { flex: none; display: flex; flex-direction: column; margin: 0 6px 3px 5px; height: 411px; border: 1px solid #828790; background: #fff; }
.filters th { height: 17px; padding: 2px 2px 0; line-height: 14px; background: linear-gradient(#fff 40%, #f2f3f6 50%, #f2f3f6); border-bottom: 1px solid #d5d5d5; }
.filters td { height: 18px; padding: 1px 2px 0; line-height: 16px; border-bottom: 1px solid #a0a0a0; }
.filters td:first-child { border-right: 1px solid #a0a0a0; }
.filters td:empty { background: #f0f0f0; }
.c-desc { width: 184px; }
.dlg-nav { flex: none; display: flex; margin-top: auto; height: 17px; background: #f0f0f0; }
.dlg-nav button { width: 17px; height: 17px; display: grid; place-items: center; border: 1px solid #707070; border-radius: 2px; background: linear-gradient(#f8f8f8, #d8d8d8); }
.dlg-nav button:disabled { border-color: #b8b8b8; background: #f4f4f4; }
.dlg-nav .hscroll { margin-left: 20px; }
.dlg-foot { flex: none; display: flex; gap: 3px; border-top: 1px solid #a0a0a0; padding: 3px 0 0 3px; }
.dlg-foot button { flex: none; width: 58px; height: 22px; line-height: 16px; padding-bottom: 4px; border: 1px solid #707070; border-radius: 3px; background: linear-gradient(#f4f4f4, #ddd); }
.dlg-foot .default { margin-left: auto; border: 2px solid #3cb4e8; line-height: 14px; }
.dlg-foot .cut { width: 55px; border-right: 0; border-radius: 3px 0 0; }
.marker { position: absolute; left: 0; top: 243px; width: 425px; height: 37px; border: 5px solid #ed1c24; }
```
FILE: app.js
```js
// Toolbars: "-" is a separator, "v"/"V" a drop-down arrow (grey/black), "[name]" a combo box.
const bands = {
  toolrow1: [
    'new open save savearrow - copyarrow right down up down - cut copy paste - split dish props gun v clock film bolt - c pageref props v',
    'plus listadd tree clip shapes delclip x'
  ],
  toolrow2: [
    'print convert - [Search] find findnext replace',
    'binoc funnel V [Filter] funnelx refresh docflow',
    'sched filmdoc play stop listplay - pie warn',
    'dbdoc v dbdoc v - pgdown pgup pgtop'
  ]
};
const icon = id => `<svg><use href="#i-${id}"/></svg>`;
for (const [row, list] of Object.entries(bands)) {
  document.getElementById(row).innerHTML = list.map(items => '<div class="band"><span class="grip"></span>' +
    items.split(' ').map(t => {
      if (t === '-') return '<span class="sep"></span>';
      if (t === 'v') return `<span class="tool-dd">${icon('dd')}</span>`;
      if (t === 'V') return `<span class="tool-dd on">${icon('dd')}</span>`;
      if (t[0] === '[') return `<select class="combo${t === '[Filter]' ? ' long' : ''}" aria-label="${t.slice(1, -1)}"></select>`;
      return `<button type="button" class="tool" aria-label="${t}">${icon(t)}</button>`;
    }).join('') + `<span class="cap">${icon('more')}</span></div>`).join('');
}

// Inventory rows: id -> title, ISCI, duration, comment, group
const eas = '********FCC-EAS TEST-EMERGENCY ALERT S';
const easNote = 'FCC-EAS Test-Emergency Alert Syst';
const known = {
  '00156': [eas, 'EAS WRDC WEEKLY', '00:00:30:00', easNote, 'STATION_ID'],
  '01744': [eas, 'EAS WLFL WEEKLY', '00:00:30:00', easNote, 'STATION_ID'],
  '10000': ['ITN', '', '00:00:30:00', 'IDOG606K000H'],
  '10001': ['SPF', '', '00:00:15:00', 'SBC NEWTIME', 'PROMO'],
  '10002': ['JD', '', '00:00:30:00', 'BYRR1523H'],
  '10003': ['JD', '', '00:00:15:00', 'BYRR1520H'],
  '10005': ['A+', '', '00:00:30:00', 'A_30SEC_UPDATED'],
  '10006': ['OLLIES BARGAIN OUTLET', 'OBOD110820H', '00:00:30:00', 'OBOD110820H'],
  '10007': ['BYRIDER 2021 OCT SPECIAL', 'BYRR2077176H', '00:01:00:00', 'BYRR2077176H'],
  '10032': ['GEORGIA PACIFIC', 'GPAC0001000H', '00:00:30:00', 'GPAC0001000H'],
  '10033': ['NC', '', '00:00:30:00', 'CS'],
  '10034': ['JD', '', '00:00:30:00', 'BY'],
  '10035': ['MY', '', '00:02:00:00', 'MIF'],
  '10036': ['ITN', '', '00:00:30:00', 'IDF'],
  '10037': ['OL', '', '00:00:15:00', 'YD'],
  '10038': ['TO', '', '00:00:15:00', 'TJ1'],
  '10039': ['TO', '', '00:00:15:00', 'TJ1'],
  '10040': ['PLA', '', '00:00:30:01', 'PF_'],
  '10041': ['ITN', '', '00:00:30:00', 'IDM'],
  '10042': ['CADENT NETWORK', '942VMW1171H', '00:00:15:00', '942']
};
const ids = ['00156', '01744'];
for (let n = 10000; n <= 10042; n++) if (n !== 10004) ids.push(String(n));
document.getElementById('inv').innerHTML = ids.map((id, i) => {
  const [title, isci, dur, note, group] = known[id] || ['', '', '', ''];
  const mark = i ? '' : '<svg width="6" height="10"><path d="M0 0l5 5-5 5z" fill="#000"/></svg>';
  return `<tr${i < 2 ? ' class="live"' : ''}><td>${mark}</td><td>${id}</td><td>${title}</td><td>${isci}</td><td>${dur}</td><td>${note}</td><td>${group || 'COMMERCIALS'}</td><td><input type="checkbox" aria-label="Ready ${id}"></td></tr>`;
}).join('');

const filters = [
  ['ALL', ''],
  ['BILL BOARDS ONLY', "where Misc1 = 'BILLBOARD'"],
  ['COMMERCIALS ONLY', "where Misc1 = 'COMMERCIAL'"],
  ['DISCLAIMERS ONLY', "where Misc1 = 'DISCLAIMER'"],
  ['FILLERS ONLY', "where Misc1 = 'FILLER'"],
  ['HAS COMMENT', "where comment &lt;&gt; ''"],
  ['MOVIES ONLY', "where Misc1 = 'MOVIES'"],
  ['NEWS UPDATES ONLY', "where Misc1 = 'NEWS_UPDATE'"],
  ['NO COMMENT', 'where comment is null'],
  ['NO SVR LOCATION', 'where Misc2 is NULL'],
  ['NOT ON SERVER', "where \"Disk Trans\" = '0'"],
  ['NOT READY TO AIR', "where Misc8 is NULL and \"Disk Trans\" = '1'"],
  ['ON SERVER', "where \"Disk Trans\" = '1'"],
  ['PAID PROGRAMS ONLY', "where Misc1 = 'PAID_PROGRAM'"],
  ['PAST KILL DATE', 'where "Disk Kill Date" &lt;= GETDATE ()'],
  ['PROGRAMS ONLY', "where Misc1 = 'PROGRAM'"],
  ['PROMOS ONLY', "where Misc1 = 'PROMO'"],
  ['PSA ONLY', "where Misc1 = 'PSA'"],
  ['STATION IDS ONLY', "where Misc1 = 'STATION_ID'"],
  ['TO PRODUCTION ONLY', "where Misc1 = '2PROD' or ID like '%_2PROD%'"]
];
document.getElementById('filters').innerHTML = filters.map(([d, w]) => `<tr><td>${d}</td><td>${w}</td></tr>`).join('');
```
